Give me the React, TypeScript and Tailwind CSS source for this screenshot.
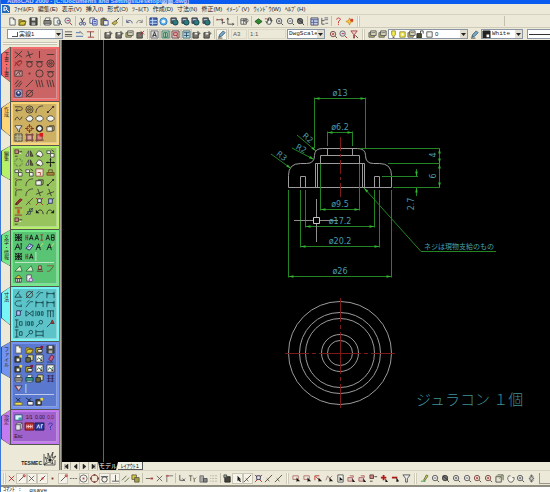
import React from "react";

type Shape = [string, string | null, string?];

const ring = (x: number, y: number, r: number) =>
  `M${x - r} ${y}a${r} ${r} 0 1 0 ${r * 2} 0a${r} ${r} 0 1 0 ${-r * 2} 0`;

const K = "#33302c";
const R = "#b02020";
const W = "#f4f4ee";
const B = "#2a3f9a";
const Y = "#d6c63a";

const glyphs: Record<string, Shape[]> = {
  new: [["M2 1h4l2 2v6h-6z", "#555", W], ["M6 1v2h2", "#555"]],
  open: [["M1 3h3l1 1h3v5H1z", "#665b20", "#b8a030"], ["M1 9l2-4h6l-2 4z", "#665b20", Y]],
  save: [["M1 1h8v8H1z", "#333", "#4a4a40"], ["M3 1h4v3H3z", null, "#ddd"], ["M3 6h4v3H3z", null, "#aaa"]],
  print: [["M3 1h5l-1 3H2z", "#555", W], ["M1 4h8v4H1z", "#444", "#8c8c84"], ["M2 7h6v2H2z", "#555", "#ccc"]],
  printGreen: [["M3 1h5l-1 3H2z", "#355", W], ["M1 4h8v4H1z", "#134", "#3aa08a"], ["M2 7h6v2H2z", "#355", "#cdd"]],
  preview: [["M1 1h5l1 2v6H1z", "#555", W], [ring(6.5, 5.5, 2), "#467"], ["M8 7l2 2", K]],
  find: [[ring(4, 4, 3), "#555", "#dde"], ["M6.500 6.500L9 9", R], ["M3 4h3", R]],
  cut: [["M3 1l3 6M7 1L4 6", "#334"], [ring(3, 7.5, 1.5), B], [ring(7, 7.5, 1.5), B]],
  copy: [["M1 1h5v6H1z", "#446", W], ["M4 3h5v6H4z", B, "#dfe4f4"], ["M5 5h3M5 7h3", B]],
  paste: [["M1 2h6v7H1z", "#554", "#8d8050"], ["M3 1h2v1H3z", "#444"], ["M4 4h5v5H4z", B, W]],
  brush: [["M9 1L5 5", K], ["M5 4l2 2-3 3-3-2z", "#665b20", "#c8b850"]],
  undo: [["M2 3v3h3M2 6c1-3 6-3 6 1", "#3c4a8a"]],
  redo: [["M8 3v3H5M8 6c-1-3-6-3-6 1", "#777"]],
  undoBold: [["M1 3v4h4z", null, "#222"], ["M3 5c2-3 6-2 6 3", "#222"]],
  redoBold: [["M9 3v4H5z", null, "#222"], ["M7 5c-2-3-6-2-6 3", "#222"]],
  blueGrid: [["M1 1h8v8H1z", "#1c3576", "#4a70b8"], ["M1 4h8M1 7h8M4 1v8", "#cfe0ff"]],
  globe: [[ring(5, 5, 4), "#1c6fb8", "#63b6ec"], [ring(5, 5, 2), null, W]],
  world: [["M1 1h6v6H1z", "#333", "#5a6a88"], [ring(6, 6, 3), "#134", "#2d7a7a"], ["M2 3h4", W]],
  axis: [["M2 2v6h6", "#444"], ["M1 3l1-2 1 2M7 7l2 1-2 1", "#444"]],
  dist: [["M1 3h6M7 3v5M7 6h3", "#444"], ["M1 2v2M6 2l2 1-2 1", "#933"]],
  windowTool: [["M1 2h6v6H1z", "#444", W], ["M1 4h6M4 2v6", "#555"], [ring(7, 4, 2), "#555"]],
  green: [["M1 5l4-3 4 3-4 3z", "#1f4a1f", "#2f8a2f"]],
  pan: [["M2 5l2 3h3l2-4-1-1v2V2L7 1v3-3H5v3-2H4v4z", "#444", W], ["M1 2h2", R]],
  zoomIn: [[ring(4.5, 4.5, 3), "#444", "#eee"], ["M7 7l2 2", K], ["M3 4.500h3M4.500 3v3", "#555"]],
  zoomOut: [[ring(4.5, 4.5, 3), "#444", "#eee"], ["M7 7l2 2", K], ["M3 4.500h3", "#555"]],
  zoomDark: [[ring(4.5, 4.5, 3), "#333", "#777"], ["M7 7l2 2", K], ["M2 2l6 5", "#222"]],
  zoomRed: [[ring(4.5, 4.5, 3), "#633", "#eed"], ["M7 7l2 2", K], ["M3 4.500h3M4.500 3v3", R]],
  table: [["M1 1h8v8H1z", "#445", "#c8cfe8"], ["M1 3h8M4 3v6M1 6h8", "#445a9a"]],
  tree: [["M2 1v7h3M2 4h3", "#444"], ["M5 3h4M6 7h3M5 1h4", "#557"]],
  help: [["M3 3c0-3 5-2 4 0L5 5v2M5 8v1", "#c01818"]],
  helpBlue: [["M3 3c0-3 5-2 4 0L5 5v2M5 8v1", "#1b2fae"]],
  star: [["M1 5l3-1 1-3 1 3 3 1-3 1-1 3-1-3z", "#d08a20", "#ffd23a"], ["M6 2h3v3H6z", null, "#d83a2a"]],
  lineW: [["M1 2h8M1 7h8", "#444"], ["M1 5h8", K]],
  lineB: [["M1 3h5M1 7h8", "#2e5cae"], ["M5 1l4 4", "#555"]],
  lineR: [["M1 2h8M2 8h7", R], ["M5 2v6", "#544"]],
  disk: [["M1 3h6v6H1z", "#333", "#77756c"], ["M3 3h3v2H3z", null, W], ["M6 1l3 3-2 1", K]],
  diskX: [["M1 3h6v6H1z", "#333", "#77756c"], ["M5 1l4 4M9 1L5 5", R]],
  aBox: [["M1 1h8v8H1z", "#555", "#ddd"], ["M3 8l2-6 2 6M3 6h4", "#222"]],
  gBox: [["M1 1h8v8H1z", "#365", "#bcd8c4"], ["M3 3h4v5H3zM5 3v5", "#264"]],
  rBox: [["M1 1h8v8H1z", "#533", "#d8bcbc"], ["M3 3h4v3H3zM6 6l2 3", "#a22"]],
  cBox: [["M1 1h8v8H1z", "#355", "#b8dce0"], ["M2 3h6M2 6h6M5 3v5", "#246"]],
  pen: [["M2 8l1-3 4-4 2 2-4 4z", "#356", "#7ac"], ["M1 9h5", K]],
  layer: [["M1 3h6v5H1z", "#555", "#b8b46a"], ["M3 1h6v5H3z", "#444", "#e8e4c8"], ["M4 3h4", "#555"]],
  filter: [["M1 1h8L6 5v4H4V5z", "#444", "#eee"]],
  filterRed: [["M1 1h7L5 5v4H4V5z", "#933", "#ecc"], ["M6 6l3 3", K]],
  x: [["M2 2l6 6M8 2L2 8", R]],
  xFine: [["M1 2l8 6M9 1L1 9", K]],
  xBent: [["M1 7l8-3M3 1l3 8", K]],
  cross: [["M5 1v8", K]],
  dash: [["M1 5h8", K]],
  slash: [["M1 9l8-8", K]],
  seg: [["M2 8l6-6", K], ["M1 7h2v2H1zM7 1h2v2H7z", null, K]],
  mid: [["M2 8l6-6", K], ["M4 4h2v2H4z", null, R]],
  hatch3: [["M1 6l4-5M2 9l6-7M5 9l4-5", K]],
  bars: [["M1 1l2 8M4 1l2 8M7 1l2 8", K]],
  dot: [["M4 4h2v2H4z", null, "#802a2a"]],
  circle: [[ring(5, 5, 4), K]],
  target: [[ring(5, 5, 4), K], [ring(5, 5, 2), K], ["M4 5h2", K]],
  targetR: [[ring(5, 5, 3), "#7a2a1a"], ["M5 0v4M5 6v4M0 5h4M6 5h4", "#7a2a1a"]],
  tangent: [[ring(5, 6, 3), K], ["M1 3h8", K]],
  donut: [[ring(5, 5, 3), "#111", "#eee"], [ring(5, 5, 3.5), "#111"]],
  circX: [[ring(5, 5, 3.5), K], ["M1 9l8-8", K]],
  redScribble: [["M1 8c1-5 5-7 7-6s-1 5-3 5-3-3 3-5", "#8c1c1c"], ["M1 3l5 5", "#a22"]],
  boxPic: [["M1 2h8v6H1z", "#433", "#c8a0a0"], ["M2 7l3-4 2 4M6 3h2", "#622"]],
  ball: [["M1 1h8v8H1z", "#446", "#b8bce0"], [ring(5, 5, 2.5), "#224", "#334a9a"], ["M4 3h2v2H4z", null, "#fff"]],
  hook: [["M1 2h6c3 0 3 4 0 4H2M4 4L2 6l2 2", K]],
  arc: [["M1 9c0-5 3-8 8-8", K]],
  arcEnd: [["M2 9V5c0-2 1-3 3-3h4", K], ["M1 1h2", R]],
  wave: [["M1 7c2-5 3-4 4-2s2 2 4-2", K]],
  ellipse: [["M1 5c0-4 8-4 8 0s-8 4-8 0", K, W]],
  poly: [["M1 5l3-3h3l2 3-2 3H3z", K, W]],
  rect: [["M1 3h6v5H1z", "#333", W], ["M3 3l1-1h5v5l-2 1", "#333"]],
  funnel: [["M1 2h8L6 6v3L4 7V6z", "#333", "#ddd"], ["M2 3h5", W]],
  grid: [["M1 1h8v8H1z", "#444", "#9c9468"], ["M1 4h8M1 7h8M4 1v8M7 1v8", "#b8b49a"]],
  gridPink: [["M2 2h6v6H2z", "#633", "#d8a8a0"], ["M0 2h10M0 8h10M2 0v10M8 0v10", "#744"]],
  gridRed: [["M2 2h6v6H2z", "#633", "#d88"], ["M0 8h10M2 0v10", "#744"], ["M5 0h4v4H5z", null, "#d81a1a"]],
  mirror: [["M4 2v6H1z", "#444", "#ddd"], ["M6 2v6h3z", "#333", "#885a2a"]],
  shapes: [["M1 6l3-4 3 1 2 4-3 2z", "#444", W], ["M2 8h3", K]],
  shapes2: [["M1 2h4v3H1zM5 5h4v4H5z", "#444", W], ["M6 1l3 2", K]],
  dotted: [["M3 1h1M6 1h1M9 3v1M9 6v1M7 9H6M4 9H3M1 7V6M1 4V3M2 2h1M7 2h1M2 8h1M7 8h1", "#344a28"]],
  move: [["M5 0v10M0 5h10", "#111"], ["M4 2h2M4 8h2M2 4v2M8 4v2", "#111"]],
  scaleBox: [["M1 1h8v8H1z", "#8a4a3a", "#efe6d8"], ["M3 5h3v3", "#a33"]],
  stretch: [["M1 5h8v3H1z", "#642", "#a8843a"], ["M3 5V2h4v3", "#642"]],
  pipe: [["M2 7l5-5 2 1-6 6z", "#5a1a1a", "#a83030"], ["M1 9l2-2", K]],
  needle: [["M1 9l8-8M3 5l3 3", "#4a3a2a"]],
  explode: [["M1 1l8 8M9 1L1 9", R], ["M3 2h4v4H3z", "#224", "#eee"]],
  explodeB: [["M1 9l8-8", B], ["M3 2h4v5H3z", "#224", "#b8c4ff"]],
  align: [["M1 1h8M1 9h8", "#922"], ["M4 3h2v4H4z", "#b62", "#d84a2a"], ["M1 3v4M9 3v4", Y]],
  chain: [["M1 9l3-3M6 4l3-3", K], ["M3 5h3v3H3zM5 2h3v3H5z", "#345"]],
  match: [["M1 1h4v4H1z", "#533", "#c88"], ["M6 3h3M1 8h3", K], ["M6 5h2", W]],
  text: [["M1 9l3-7 3 7M2 6h4", "#141414"], ["M7 2h2M8 2v6", "#141414"]],
  textDense: [["M1 1l8 8M9 1L1 9M1 5h8M5 1v8", "#141414"], ["M2 2h6v6H2z", "#222"]],
  textAB: [["M0 8l2-6 2 6M1 6h2", "#111"], ["M6 2v6h3V5H6h3V2z", "#111"]],
  textRed: [["M0 8l2-6 2 6M1 6h2", "#111"], ["M6 2h3M6 8h3M7.500 2v6", "#a22"]],
  textHA: [["M1 2v6M3 2v6M1 5h2", "#733"], ["M5 8l2-6 2 6M5 6h4", "#111"]],
  textPen: [["M1 9l3-7 2 7M2 6h4", "#111"], ["M6 5l3-4", "#d8e86a"]],
  textBlue: [["M1 7l4-5 4 2-4 5z", "#225", "#c8d4f8"], ["M3 6l4-2", B]],
  caret: [["M1 0v10", "#d8eed8"]],
  tri: [["M1 8h8L7 2z", "#2a6a3a", "#d8eec8"]],
  stamp: [["M2 8h7M3 6h5M4 2h3v4H4z", "#622", "#d8b8a8"]],
  mark: [["M1 2h8M1 8h3", "#943"], ["M4 8l4-5", "#452"]],
  house: [["M1 5l4-4 4 4z", "#442", Y], ["M2 5h6v4H2z", "#333", "#eee"], ["M4 5v4M6 5v4", "#333"]],
  sheet: [["M2 1h5v7H2z", "#546", W], [ring(6.5, 6.5, 2), "#84a", "#e8c8f8"]],
  ang: [["M9 8H1l5-7M4 4c2 0 3 2 3 4", "#124248"]],
  dimC: [["M8 2H5C0 2 0 8 5 8h3M8 6v3", "#124248"]],
  dimR: [["M1 9l5-6h3M5 1L2 4", "#124248"]],
  dimH: [["M1 2v7M9 2v7M1 4h8", "#124248"], ["M2 3v2M8 3v2", "#124248"]],
  dimX: [["M1 2l8 6M9 2L1 8M1 2v6M9 2v6", "#124248"]],
  dimT: [["M1 2h8M2 2v7M5 2v7M8 2v7", "#124248"]],
  dimTxt: [["M1 2v6M3 3h2v4H3zM7 3h2v4H7z", "#124248"]],
  dimLd: [["M1 9l4-4", "#124248"], [ring(6.5, 3.5, 2), "#124248"]],
  dimTri: [["M1 9l4-4", "#124248"], ["M5 5l2-4 2 4z", "#622", "#a44"]],
  dimBox: [["M1 1v8M9 1v8M1 3h8M1 7h8", "#124248"]],
  dimI: [["M1 1h4M1 9h4M3 1v8M6 3h3v4H6z", "#124248"]],
  copyFile: [["M3 1h6v6H3z", "#334", "#d8d890"], ["M1 4h5v5H1z", "#222", "#666a40"]],
  saveStar: [["M1 3h6v6H1z", "#222", "#4a4a30"], ["M3 5h3v3H3z", null, "#eee"], ["M6 1h3v3H6z", null, "#e8d84a"]],
  openRed: [["M1 3h6v6H1z", "#222", Y], ["M3 5h5v3H3z", "#222", W], ["M6 1h3v3H6z", null, "#7a1a4a"]],
  picFile: [["M1 1h8v8H1z", "#333", W], ["M2 7l2-3 2 2 2-3", "#264"], ["M6 6h2v2H6z", null, "#333"]],
  eraser: [["M3 6l3-5 3 2-3 5z", "#622", "#d05a8a"], ["M1 9h7", "#335"]],
  wires: [["M1 2h8M1 5h8M1 8h8", "#632a5a"], ["M3 1v8M7 1v8", "#225"]],
  bin: [["M1 2h8L5 8z", "#335", "#c8c8d8"], ["M1 1l4 6", R]],
  folderY: [["M1 6h8v3H1z", "#664", "#f0e040"], ["M2 1l5 4M7 1L3 5", "#123"]],
  diskB: [["M3 5h6v4H3z", "#224", W], ["M1 1l6 4M7 1L3 5", "#123"]],
  windowC: [["M1 2h8v6H1z", "#246", "#d8f4f4"], ["M5 5h4v3H5z", null, "#3aa0b0"]],
  bagW: [["M2 3l2-2h5v6l-2 2H2z", "#444", "#e8e4f0"], ["M2 3h5v6M7 3l2-2", "#444"]],
  redTile: [["M0 1h10v8H0z", "#611", "#c02a2a"], ["M2 3v4M4 3v4M6 3v4M8 3v4M2 5h6", "#f4d0d0"]],
  blueTile: [["M0 1h10v8H0z", "#114", "#2a3aa0"], ["M2 7l2-4 1 4M7 3v4M7 3h2", "#fff"]],
  snapEnd: [["M2 8l5-5", "#444"], ["M7 1h2v2H7z", R, W]],
  snapX: [["M2 2l6 6M8 2L2 8", "#555"]],
  ext: [["M1 5h2M4 5h2M7 5h2", "#555"]],
  circDot: [[ring(5, 5, 4), "#555"], ["M4 4h2v2H4z", null, "#a44"]],
  circRed: [[ring(5, 5, 4), "#9a3a2a"], ["M4 0h2v2H4zM4 8h2v2H4zM0 4h2v2H0zM8 4h2v2H8z", null, "#744"]],
  perp: [["M5 1v7M1 8h8", "#444"]],
  para: [["M1 7l5-5M4 9l5-5", "#4a5a3a"]],
  ins: [["M1 1h5v5H1z", "#554", Y], ["M4 4h5v5H4z", "#554", "#a8a040"]],
  from: [["M1 5h5", "#555"], ["M6 4h3v2H6z", null, "#a44"]],
  corner: [["M2 9V2h7", "#666"], ["M1 1h3v2H1z", null, "#b66"]],
  coord: [["M2 1v6h5", "#444"], ["M5 5l3 3M8 5L5 8", "#555"]],
  coordY: [["M1 2h4M3 2v6M6 4l1 2 2-2M7 6v3", "#554"]],
  stack: [["M1 2h4v7H1z", "#666", "#aaa"], ["M5 5h4v4H5z", "#444", "#888"]],
  dots: [["M1 2h8M1 5h8M1 8h8", "#b4b0a4"], ["M3 1v8M6 1v8", "#ece9d8"]],
  bulb: [["M2 3h6v6H2z", "#222", "#44443a"], ["M1 1h3v3H1z", "#444", "#9a9"]],
  cursor: [["M5 2v6l1-1 2 2 1-1-2-2h2z", null, "#181818"]],
  pickBox: [["M1 2h6v4H1z", "#a66"], ["M5 4v5l1-1h3z", null, "#181818"]],
  pickRed: [["M1 2h5M1 2v5M2 3l4 4", R], ["M5 4v5l1-1h3z", null, "#181818"]],
  pickLine: [["M1 7l2-5 2 3 3-3", "#977"], ["M5 4v5l1-1h3z", null, "#181818"]],
  pickPage: [["M2 1h6v8H2z", "#444", W], ["M4 3v5l1-1h3z", null, "#181818"]],
  pickLayer: [["M1 4h5v4H1zM3 2h4v2", "#a55", "#dcc"], ["M6 5v4h3z", null, "#181818"]],
  plus: [["M3 1h2v2h2v2H5v2H3V5H1V3h2z", null, "#b01818"], ["M6 5v4h3z", null, "#181818"]],
  minus: [["M1 3h6v2H1z", null, "#b01818"], ["M6 4v5l3-1z", null, "#181818"]],
  pencil: [["M4 7l3-6 2 1-4 6z", "#665", "#c8c83a"], ["M1 8h5", "#294"]],
  cube: [["M1 3h6v6H1zM3 1h6v6", "#444", "#e4e4d0"], ["M1 3l2-2M5 5l3-4", "#784"]],
  hand: [["M2 4v2l2 3h3l2-3V4H7M2 4l1-2h2", "#555", "#f4f4ec"]],
  orbit: [["M5 1v8M2 5h6M3 3l2-2 2 2M3 7l2 2 2-2", "#555"], [ring(5, 5, 2), "#555", "#ccc"]],
  sun: [["M2 2h6v6H2z", "#8a8030", "#f2ea50"], ["M4 4h2v2H4z", null, "#fff"]],
  lamp: [["M3 1h4v4L6 7H4L3 5z", "#8a8030", "#f6ee50"], ["M4 8h2v1H4z", null, "#444"]],
  lock: [["M1 4h5v5H1z", "#222", "#4a4a30"], ["M5 4V1h3v3", "#333"]],
  square: [["M2 2h6v6H2z", "#444", W]],
  swatch: [["M1 1h8v8H1z", "#222", "#222"], ["M5 5h3v3H5z", null, "#fff"]],
};

function Glyph({ name }: { name: string }) {
  return (
    <svg viewBox="0 0 10 10" className="size-[9px] shrink-0 overflow-visible" aria-hidden="true">
      {(glyphs[name] ?? []).map(([d, stroke, fill], i) => (
        <path key={i} d={d} stroke={stroke ?? "none"} fill={fill ?? "none"} strokeWidth={0.9} />
      ))}
    </svg>
  );
}

function Tool({ name, on }: { name: string; on?: boolean }) {
  return (
    <button
      type="button"
      aria-label={name}
      className={
        on
          ? "flex h-[11px] items-center justify-center border border-[#cbc7b7] bg-[#f6f4ea]"
          : "flex h-[11px] items-center justify-center"
      }
    >
      <Glyph name={name} />
    </button>
  );
}

function Bar({ items, className, on = "" }: { items: string; className: string; on?: string }) {
  const lit = on.split(" ");
  return (
    <div className={`grid shrink-0 auto-cols-fr grid-flow-col ${className}`}>
      {items.split(" ").map((n, i) => (
        <Tool key={i} name={n} on={lit.includes(String(i))} />
      ))}
    </div>
  );
}

const Sep = () => <span className="mx-px h-[10px] w-px shrink-0 bg-[#c4c0ae]" />;
const Grip = () => <span className="mx-[2px] h-[11px] w-[3px] shrink-0 border-x border-[#cfcbba] bg-[#faf8ee]" />;

function Combo({ label, value, className, children }: { label: string; value: string; className: string; children?: React.ReactNode }) {
  return (
    <div className={`flex h-[10px] items-center overflow-hidden border border-[#8a96a4] bg-white ${className}`}>
      {children}
      <select aria-label={label} className="h-[8px] min-w-0 flex-1 appearance-none bg-white pl-px text-[6px] leading-[8px] text-[#222]">
        <option>{value}</option>
      </select>
      <span className="pointer-events-none flex h-full w-[7px] items-center justify-center bg-[#e2dfd0]">
        <svg viewBox="0 0 5 3" className="h-[3px] w-[5px]" aria-hidden="true">
          <path d="M0 0h5L2.500 3z" fill="#222" />
        </svg>
      </span>
    </div>
  );
}

type Group = { label: string; tab: string; shape: string; height: string; outer: string; inner: string; rows: string[] };

const groups: Group[] = [
  {
    label: "下書・上書", tab: "h-[35px]", height: "h-[55px]", outer: "bg-[#f26c6c]", inner: "bg-[#cb6464]",
    shape: "[clip-path:polygon(100%_0,0_7px,0_28px,100%_35px)]",
    rows: ["xFine xBent cross dash", "redScribble tangent tangent target", "boxPic dot circle tangent", "hatch3 slash bars bars", "ball circX"],
  },
  {
    label: "作成", tab: "h-[34px]", height: "h-[44px]", outer: "bg-[#fbd577]", inner: "bg-[#cdb062]",
    shape: "[clip-path:polygon(100%_0,0_6px,0_27px,100%_34px)]",
    rows: ["hook target arc seg", "wave poly ellipse ellipse", "funnel targetR donut rect", "grid gridPink gridRed"],
  },
  {
    label: "編集", tab: "h-[34px]", height: "h-[84px]", outer: "bg-[#b5f26a]", inner: "bg-[#97c45c]",
    shape: "[clip-path:polygon(100%_0,0_5px,0_29px,100%_34px)]",
    rows: ["match mirror shapes shapes2", "dotted mirror shapes move", "shapes2 shapes2 scaleBox stretch", "arcEnd arc rect seg", "arcEnd arc xBent xBent", "pipe needle explode explodeB", "align chain undoBold redoBold", "match"],
  },
  {
    label: "文字・情報", tab: "h-[36px]", height: "h-[57px]", outer: "bg-[#72ea8c]", inner: "bg-[#58c474]",
    shape: "[clip-path:polygon(100%_0,0_5px,0_31px,100%_36px)]",
    rows: ["textDense textHA textRed textAB", "text textBlue textPen textPen", "textDense textHA caret", "-", "tri tri stamp mark", "house sheet"],
  },
  {
    label: "寸法", tab: "h-[38px]", height: "h-[55px]", outer: "bg-[#78f6f6]", inner: "bg-[#5cc4c8]",
    shape: "[clip-path:polygon(100%_0,0_6px,0_31px,100%_38px)]",
    rows: ["ang circX dimR dimH", "dimC dimR dimH dimH", "explodeB dimX dimTxt dimT", "dimI dimTxt dimLd dimTri", "dimI dimLd dimBox"],
  },
  {
    label: "ファイル", tab: "h-[36px]", height: "h-[68px]", outer: "bg-[#7393f0]", inner: "bg-[#5b78cf]",
    shape: "[clip-path:polygon(100%_0,0_5px,0_31px,100%_36px)]",
    rows: ["new open openRed save", "saveStar copyFile picFile eraser", "saveStar openRed picFile picFile", "print printGreen copyFile wires", "bin caret", "-", "folderY diskB saveStar"],
  },
  {
    label: "設定", tab: "h-[35px]", height: "h-[35px]", outer: "bg-[#c47af0]", inner: "bg-[#9f62cc]",
    shape: "[clip-path:polygon(100%_0,0_6px,0_29px,100%_35px)]",
    rows: ["windowC t:1/1 t:0.00 r:0.0", "bagW redTile blueTile helpBlue", "t:Esc"],
  },
];

function Cell({ name }: { name: string }) {
  const m = /^([tr]):(.*)$/.exec(name);
  return (
    <button type="button" aria-label={m ? m[2] : name} className="flex h-[10px] items-center justify-center">
      {m ? (
        <span className={m[1] === "r" ? "text-[5px] leading-[8px] text-[#8c1030]" : "text-[5px] leading-[8px] text-[#241430]"}>{m[2]}</span>
      ) : (
        <Glyph name={name} />
      )}
    </button>
  );
}

function Palette({ g }: { g: Group }) {
  return (
    <section className={`flex shrink-0 ${g.height}`}>
      <button type="button" className={`w-[9px] shrink-0 bg-[#4c4c48] pb-px pl-px ${g.tab} ${g.shape}`}>
        <span className={`flex h-full items-center justify-start pt-[5px] text-[5px] leading-[8px] whitespace-nowrap text-[#1c1c1c] [writing-mode:vertical-rl] ${g.outer} ${g.shape}`}>
          {g.label}
        </span>
      </button>
      <div className={`flex-1 border-b border-l border-[#55554f] p-[2px] ${g.outer}`}>
        <div className={`flex h-full flex-col border-r border-b border-white/30 ${g.inner}`}>
          {g.rows.map((row, i) =>
            row === "-" ? (
              <hr key={i} className="mx-[2px] my-px border-white/60" />
            ) : (
              <div key={i} className="grid min-h-0 grid-cols-4 [flex:0_1_10px]">
                {row.split(" ").map((n, j) => (
                  <Cell key={j} name={n} />
                ))}
              </div>
            ),
          )}
        </div>
      </div>
    </section>
  );
}

const arrow = (x: number, y: number, dx: number, dy: number) =>
  `M${x} ${y}L${x + dx * 5 - dy * 1.3} ${y + dy * 5 + dx * 1.3}L${x + dx * 5 + dy * 1.3} ${y + dy * 5 - dx * 1.3}z`;

const widths: [number, number, number, number, string][] = [
  [314.5, 365.5, 98.5, 148, "ø13"],
  [327.5, 352.5, 132.5, 146, "ø6.2"],
  [320.5, 359.5, 209.5, 164, "ø9.5"],
  [305.5, 374.5, 226.5, 190, "ø17.2"],
  [300.5, 379.5, 246.5, 190, "ø20.2"],
  [288.5, 391.5, 276.5, 190, "ø26"],
];

const half = "M340 148.500H322.500Q314.500 148.500 314.500 155.500Q314.500 163.500 306.500 163.500H300.500Q288.500 163.500 288.500 175.500V187.500H340M327.500 148.500V155.500M340 155.500H320.500V163.500M340 163.500H315.500V187.500M317.500 163.500V187.500M300.500 187.500V176.500H305.500V187.500";

function Drawing() {
  return (
    <svg width="488" height="422" viewBox="62 40 488 422" className="block max-w-none" role="img" aria-label="部品図">
      <path d="M103.500 40V462" stroke="#2a7c80" />
      <g fill="none" stroke="#9c9c9c">
        <path d={half} />
        <path d={half} transform="matrix(-1 0 0 1 680 0)" />
        {[51.5, 40.5, 34.5, 18.5, 12.5].map((r) => (
          <circle key={r} cx="340" cy="353" r={r} />
        ))}
      </g>
      <g stroke="#7c1a1a" fill="none">
        <path d="M340.500 137V197" strokeDasharray="14 3 3 3" />
        <path d="M285 353.500H395" strokeDasharray="24 3 4 3 42 3 4 3 24" />
        <path d="M340.500 298V408" strokeDasharray="24 3 4 3 42 3 4 3 24" />
      </g>
      <g stroke="#238423" fill="none">
        {widths.map(([a, b, y, from]) => (
          <path key={y} d={`M${a} ${y}H${b}M${a} ${from}V${y < from ? y - 1 : y + 1}M${b} ${from}V${y < from ? y - 1 : y + 1}`} />
        ))}
        <path d="M360 148.500H440M388 163.500H440M382 176.500H418M393 187.500H440M439.500 148V188M416.500 169V176M416.500 188V196" />
        <path d="M297 135L316 151M292 148L314 159.500M271 154L291 168.500M364 188L421 251.500H496" />
      </g>
      <g fill="#32b432">
        {widths.map(([a, b, y]) => (
          <path key={y} d={arrow(a, y, 1, 0) + arrow(b, y, -1, 0)} />
        ))}
        <path d={arrow(439.5, 148.5, 0, 1) + arrow(439.5, 163.5, 0, -1) + arrow(439.5, 163.5, 0, 1) + arrow(439.5, 187.5, 0, -1)} />
        <path d={arrow(416.5, 176.5, 0, -1) + arrow(416.5, 187.5, 0, 1) + arrow(316, 151, -0.76, -0.65) + arrow(314, 159.5, -0.88, -0.46) + arrow(291, 168.5, -0.8, -0.6) + arrow(364, 188, 0.67, 0.74)} />
      </g>
      <g stroke="#8f8f8f" fill="none">
        <path d="M294 220.500H313M320 220.500H338M316.500 199V217M316.500 224V242" />
        <path d="M313.500 217.500h6v6h-6z" stroke="#c4c4c4" />
      </g>
      <g fill="#4a9aa8" textAnchor="middle" className="font-['DejaVu_Sans'] text-[8px]">
        {widths.map(([, , y, , label]) => (
          <text key={y} x="340" y={y - 3}>{label}</text>
        ))}
        <text transform="translate(306 140) rotate(41)">R2</text>
        <text transform="translate(300 151) rotate(28)">R2</text>
        <text transform="translate(280 158) rotate(38)">R3</text>
        <text transform="translate(436 155) rotate(-90)">4</text>
        <text transform="translate(436 176) rotate(-90)">6</text>
        <text transform="translate(414 204) rotate(-90)">2.7</text>
      </g>
      <g fill="#4aa3ac" className="font-['Noto_Sans_CJK_JP']">
        <text x="424" y="249" className="text-[7px]">ネジは現物支給のもの</text>
        <text x="416" y="405" fill="#3f8f94" className="text-[15px] font-light">ジュラコン １個</text>
      </g>
    </svg>
  );
}

const menus = ["ﾌｧｲﾙ(F)", "編集(E)", "表示(V)", "挿入(I)", "形式(O)", "ﾂｰﾙ(T)", "作成(D)", "寸法(N)", "修正(M)", "ｲﾒｰｼﾞ(V)", "ｳｨﾝﾄﾞｳ(W)", "ﾍﾙﾌﾟ(H)"];

export default function App() {
  return (
    <div className="flex h-screen flex-col overflow-hidden border-l border-[#3c78d8] bg-[#ece9d8] font-['Liberation_Sans','Noto_Sans_CJK_JP',sans-serif] text-[#222]">
      <header className="flex h-[4px] shrink-0 items-end overflow-hidden bg-[#0a5cf0] pl-[6px] text-[6px] leading-[6px] font-bold whitespace-nowrap text-[#c4d8fc]">
        AutoCAD 2000 - [C:\Documents and Settings\Desktop\図面.dwg]
      </header>
      <nav className="flex h-[10px] shrink-0 items-center gap-[4px] pl-px text-[6px] leading-[8px] whitespace-nowrap">
        <svg viewBox="0 0 8 8" className="size-[8px]" aria-hidden="true">
          <path d="M0 0h6l2 2v6H0z" fill="#2a6cb8" />
          <path d="M2 6V2h2l1 2-1 1H2M5 5l2 2" stroke="#fff" fill="none" />
        </svg>
        {menus.map((m) => (
          <button key={m} type="button">{m}</button>
        ))}
      </nav>

      <div className="flex h-[13px] shrink-0 items-center border-t border-[#d6d2c0] pl-[6px]">
        <Bar className="w-[32px]" items="new open save" />
        <Sep />
        <Bar className="w-[32px]" items="print preview find" />
        <Sep />
        <Bar className="w-[44px]" items="cut copy paste brush" />
        <Sep />
        <Bar className="w-[21px]" items="undo redo" />
        <Sep />
        <Bar className="w-[64px]" items="blueGrid globe world world world world" />
        <Sep />
        <Bar className="w-[21px]" items="dist axis" />
        <Sep />
        <Bar className="w-[11px]" items="windowTool" />
        <Sep />
        <Bar className="w-[53px]" items="green pan zoomIn zoomOut zoomDark" />
        <Sep />
        <Bar className="w-[21px]" items="table tree" />
        <Sep />
        <Bar className="w-[22px]" items="help star" />
        <Grip />
        <span className="w-[141px]" />
        <Sep />
      </div>

      <div className="flex h-[13px] shrink-0 items-center border-t border-[#cfcbb9] pl-[6px]">
        <Combo label="線種" value="実線1" className="w-[56px]">
          <span className="ml-[4px] h-[5px] w-[6px] border-r border-b border-[#555]" />
        </Combo>
        <Bar className="w-[33px]" items="lineW lineB lineR" />
        <Grip />
        <Bar className="w-[43px]" items="disk disk layer diskX" />
        <Sep />
        <Bar className="w-[64px]" items="aBox gBox rBox cBox disk disk" on="0 1 2 3" />
        <Sep />
        <Bar className="w-[11px]" items="pen" on="0" />
        <Sep />
        <input aria-label="用紙" readOnly value="A3" className="mx-px h-[10px] w-[16px] border border-[#dcd8c6] pl-px text-[6px] text-[#555]" />
        <input aria-label="縮尺" readOnly value="1:1" className="mr-px h-[10px] w-[38px] border border-[#dcd8c6] pl-px text-[6px] text-[#555]" />
        <Combo label="尺度" value="DwgScale" className="w-[38px] font-['Liberation_Mono']" />
        <Bar className="ml-[3px] w-[32px]" items="zoomRed find filterRed" />
        <Grip />
        <Bar className="w-[21px]" items="layer layer" />
        <Combo label="画層" value="0" className="w-[80px]">
          <span className="flex">
            <Glyph name="lamp" />
            <Glyph name="sun" />
            <Glyph name="layer" />
            <Glyph name="lock" />
            <Glyph name="square" />
          </span>
        </Combo>
        <Bar className="w-[13px]" items="pen" />
        <Combo label="色" value="White" className="w-[42px] font-['Liberation_Mono']">
          <Glyph name="swatch" />
        </Combo>
        <div className="ml-[4px] flex h-[10px] min-w-0 flex-1 items-center border border-r-0 border-[#8a96a4] bg-white">
          <span className="ml-px h-px flex-1 bg-[#333]" />
        </div>
      </div>

      <main className="flex min-h-0 flex-1">
        <aside className="flex w-[58px] shrink-0 flex-col">
          <div className="h-[7px] shrink-0 px-[2px] pt-[2px]">
            <div className="h-[3px] border-y border-[#c8c4b2] bg-[#faf8ee]" />
          </div>
          {groups.map((g) => (
            <Palette key={g.label} g={g} />
          ))}
          <div className="flex items-end justify-end gap-px pt-[6px] pr-[3px]">
            <span className="text-[5px] leading-[6px] font-bold">TESMEC</span>
            <svg viewBox="0 0 13 15" className="h-[15px] w-[13px]" fill="none" stroke="#222" aria-hidden="true">
              <path d="M1 3v11h11V9M1 14l3-4-2-4 3 2V2l2 5 3-6-1 6 4-2-4 5 1 3-4-2z" strokeWidth={0.7} />
              <path d="M6 8h2v2H6z" fill="#222" />
            </svg>
          </div>
        </aside>
        <div className="w-[3px] shrink-0 border-x border-[#77756c] bg-[#aaa799]" />
        <div className="flex min-w-0 flex-1 flex-col bg-black">
          <div className="min-h-0 flex-1 overflow-hidden">
            <Drawing />
          </div>
          <div className="flex h-[8px] shrink-0 items-stretch bg-[#ece9d8] text-[6px] leading-[8px] whitespace-nowrap">
            {["M3 1v5M6 1v5L3 3.500z", "M6 1v5L3 3.500z", "M3 1v5l3-2.500z", "M6 1v5M3 1v5l3-2.500z"].map((d) => (
              <button key={d} type="button" aria-label="タブ移動" className="flex w-[9px] items-center justify-center border-r border-[#b8b4a4]">
                <svg viewBox="0 0 8 7" className="h-[7px] w-[8px]" aria-hidden="true">
                  <path d={d} fill="#222" stroke="#222" strokeWidth={0.5} />
                </svg>
              </button>
            ))}
            <button type="button" className="w-[20px] bg-black text-white [clip-path:polygon(0_0,100%_0,90%_100%,10%_100%)]">モデル</button>
            <button type="button" className="w-[25px] border-r border-b border-[#555] bg-[#f4f2e6]">ﾚｲｱｳﾄ1</button>
          </div>
        </div>
      </main>

      <div className="flex h-[15px] shrink-0 items-center border-t border-[#d6d2c0]">
        <Grip />
        <Bar className="-ml-[2px] w-[135px]" on="1 2 3 5 7 9 10" items="x snapEnd snapX mid dot snapEnd ext circDot circRed tangent perp para ins" />
        <Sep />
        <Bar className="w-[30px]" items="from snapX corner" />
        <Sep />
        <Bar className="w-[42px]" items="coord coordY stack dots" />
        <Sep />
        <Bar className="w-[62px]" on="1 2" items="bulb cursor needle explode needle needle" />
        <Grip />
        <Bar className="w-[121px]" items="pickBox pickBox pickRed pickLine pickPage pickLayer pickLayer match plus minus filter" />
        <Grip />
        <Bar className="w-[118px]" items="pencil zoomOut zoomDark zoomIn zoomOut zoomRed zoomRed cube hand zoomIn orbit" />
        <span className="ml-[2px] h-[11px] flex-1 border-b border-l border-[#9a968a]" />
      </div>

      <div className="h-[7px] shrink-0 overflow-hidden border-t-2 border-[#8f8c80] bg-white font-['Liberation_Mono','Noto_Sans_CJK_JP',monospace] text-[6px] leading-[6px]">
        <label className="flex items-start pl-[2px]">
          <span className="whitespace-nowrap">ｺﾏﾝﾄﾞ:</span>
          <input readOnly value="_qsave" className="ml-[4px] h-[6px] min-w-0 flex-1 p-0 leading-[6px]" />
        </label>
      </div>
    </div>
  );
}
